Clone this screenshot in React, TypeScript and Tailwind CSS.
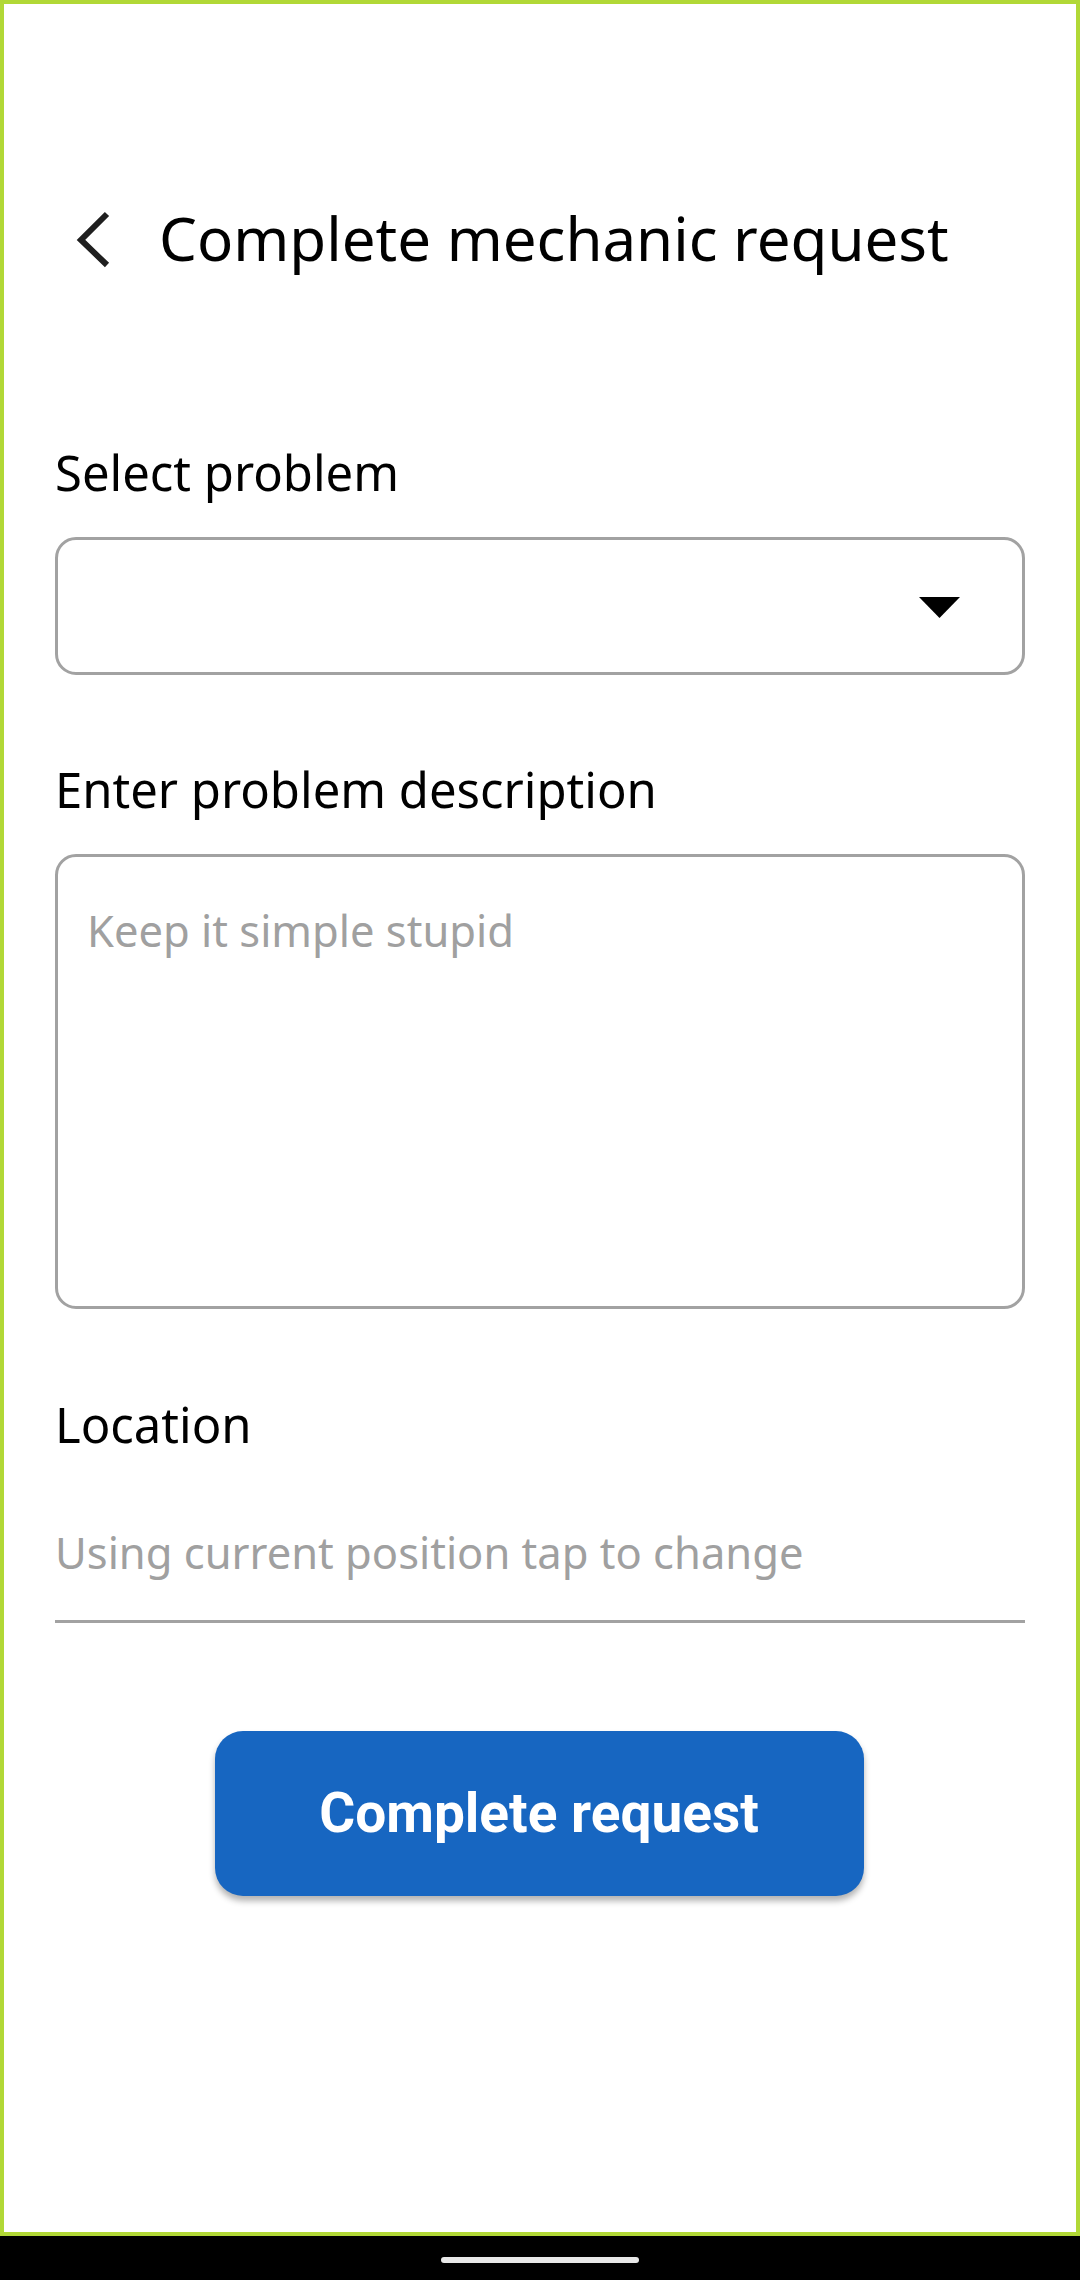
import React from "react";

export default function App() {
  return (
    <div className="w-[1080px] h-[2280px] bg-black flex flex-col font-['Noto_Sans',sans-serif]">
      <div className="h-[2236px] bg-white border-[4px] border-[#b1d836] flex flex-col px-[51px] pt-[204px]">
        {/* Header */}
        <div className="flex flex-row items-start h-[60px]">
          <svg width="40" height="58" viewBox="0 0 40 58" className="ml-[20px] mt-[2px] shrink-0">
            <polyline
              points="32,4 6,30 32,55"
              fill="none"
              stroke="#1f1f1f"
              strokeWidth="6"
              strokeLinecap="butt"
              strokeLinejoin="miter"
            />
          </svg>
          <h1 className="ml-[44px] text-[60px] leading-none text-black font-normal whitespace-nowrap">
            Complete mechanic request
          </h1>
        </div>

        {/* Select problem */}
        <div className="mt-[180px] text-[49px] leading-none text-black">Select problem</div>
        <div className="mt-[40px] h-[138px] rounded-[21px] border-[3px] border-[#a2a2a2] flex items-center justify-end pr-[62px]">
          <svg width="41" height="21" viewBox="0 0 41 21" className="mt-[2px]">
            <polygon points="0,0 41,0 20.5,21" fill="#000" />
          </svg>
        </div>

        {/* Description */}
        <div className="mt-[90px] text-[49px] leading-none text-black">Enter problem description</div>
        <div className="mt-[40px] h-[455px] rounded-[21px] border-[3px] border-[#a2a2a2] pl-[29px] pt-[52px]">
          <div className="text-[43.5px] leading-none text-[#a0a0a0]">Keep it simple stupid</div>
        </div>

        {/* Location */}
        <div className="mt-[91px] text-[49px] leading-none text-black">Location</div>
        <div className="mt-[82px] pb-[45px] border-b-[3px] border-[#a2a2a2]">
          <div className="text-[43.5px] leading-none text-[#a0a0a0]">Using current position tap to change</div>
        </div>

        {/* Button */}
        <div className="mt-[108px] flex justify-center">
          <button className="w-[649px] h-[165px] rounded-[28px] bg-[#1766c1] shadow-[0_5px_6px_rgba(0,0,0,0.3)] flex items-center justify-center ml-[-2px]">
            <span className="font-['Roboto',sans-serif] font-bold text-[55px] leading-none text-white">
              Complete request
            </span>
          </button>
        </div>
      </div>
      <div className="flex-1 flex items-start justify-center pt-[21px]">
        <div className="w-[198px] h-[6px] rounded-full bg-[#e8e8e8]" />
      </div>
    </div>
  );
}
